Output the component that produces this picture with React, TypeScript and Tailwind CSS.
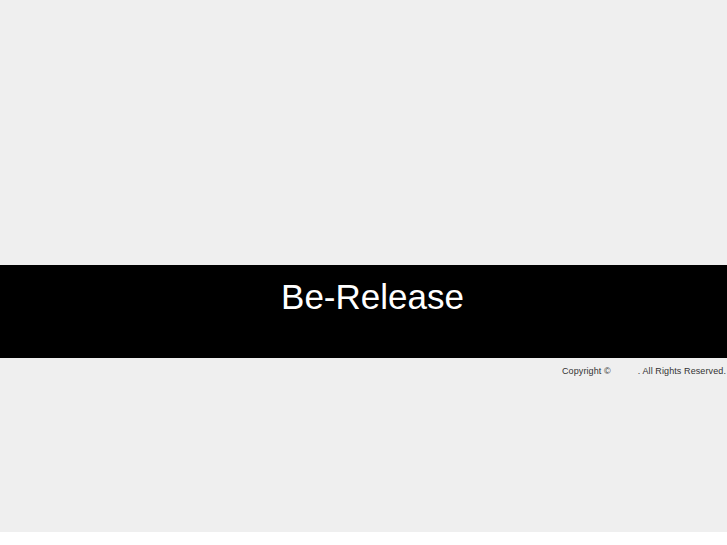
export default function App() {
  return (
    <div className="min-h-screen bg-white" style={{ fontFamily: '"Liberation Sans", Arial, sans-serif' }}>
      <div className="h-[532px] bg-[#efefef] flex flex-col">
        {/* header area */}
        <div className="h-[265px]" />

        {/* title band */}
        <div className="h-[93px] bg-black pt-[11px] pl-[18px] text-center">
          <h1 className="text-[35px] leading-[41px] text-white font-normal">Be-Release</h1>
        </div>

        {/* footer */}
        <footer className="pt-[7px] pr-[1px] text-right text-[9px] leading-[12px] text-[#333] tracking-[0.1px]">
          Copyright ©<span className="inline-block w-[27px]"></span>. All Rights Reserved.
        </footer>
      </div>
    </div>
  );
}
